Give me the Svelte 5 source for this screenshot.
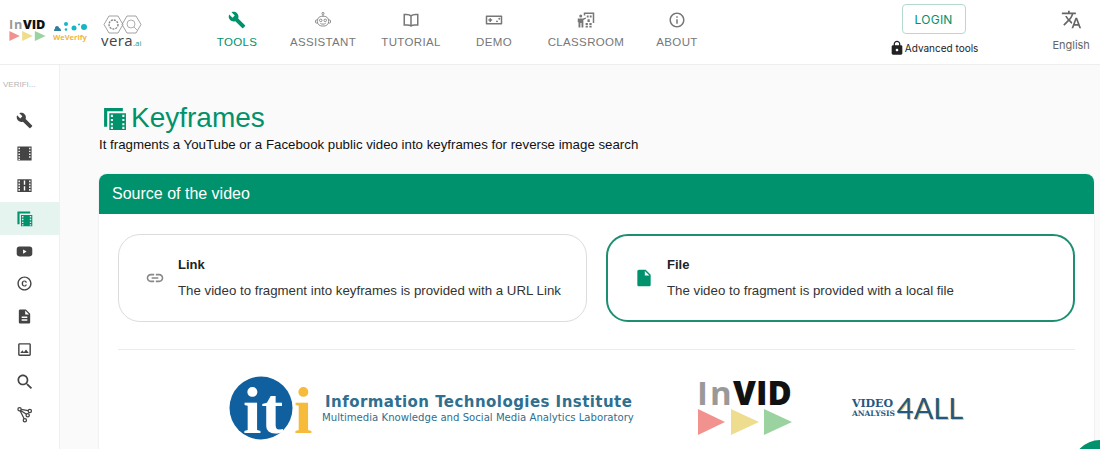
<script lang="ts">
	const green = '#00926c';

	const tabs = [
		{ label: 'TOOLS', width: 86, icon: 'build', active: true },
		{ label: 'ASSISTANT', width: 86, icon: 'robot' },
		{ label: 'TUTORIAL', width: 90, icon: 'book' },
		{ label: 'DEMO', width: 76, icon: 'game' },
		{ label: 'CLASSROOM', width: 108, icon: 'classroom' },
		{ label: 'ABOUT', width: 74, icon: 'info' }
	];

	const sideItems = [
		{ icon: 'build', size: 17 },
		{ icon: 'film', size: 17 },
		{ icon: 'film2', size: 17 },
		{ icon: 'keyframes', size: 17, active: true },
		{ icon: 'play', size: 17 },
		{ icon: 'copyright', size: 17 },
		{ icon: 'doc', size: 17 },
		{ icon: 'image', size: 17 },
		{ icon: 'search', size: 20 },
		{ icon: 'graph', size: 17 }
	];

	const options = [
		{ title: 'Link', text: 'The video to fragment into keyframes is provided with a URL Link', icon: 'link' },
		{ title: 'File', text: 'The video to fragment is provided with a local file', icon: 'file', active: true }
	];
</script>

{#snippet icon(name, size = 24)}
	<svg class="icon" width={size} height={size} viewBox="0 0 24 24" fill="currentColor" aria-hidden="true">
		{#if name === 'build'}
			<path d="M22.7 19l-9.1-9.1c.9-2.3.4-5-1.5-6.9-2-2-5-2.4-7.4-1.3L9 6 6 9 1.6 4.700C.4 7.100.9 10.100 2.900 12.100c1.900 1.900 4.600 2.400 6.900 1.500l9.100 9.100c.4.4 1 .4 1.400 0l2.300-2.300c.5-.4.5-1.100.1-1.400z" />
		{:else if name === 'robot'}
			<g fill="none" stroke="currentColor" stroke-width="1.1">
				<circle cx="12" cy="3.2" r="1.4" />
				<path d="M12 4.600V7" />
				<rect x="4.500" y="7" width="15" height="13" rx="6" />
				<path d="M4.500 12H3a1 1 0 0 0-1 1v2a1 1 0 0 0 1 1h1.800M19.500 12H21a1 1 0 0 1 1 1v2a1 1 0 0 1-1 1h-1.800" />
				<circle cx="9" cy="12.5" r="1.7" />
				<circle cx="15" cy="12.5" r="1.7" />
				<path d="M8.500 16.500c2 1.400 5 1.400 7 0" />
			</g>
		{:else if name === 'book'}
			<path fill="none" stroke="currentColor" stroke-width="2" d="M12 6.500C10.500 5 8.500 4.500 6 4.500H3v14h4c2 0 3.600.4 5 1.500 1.400-1.100 3-1.500 5-1.500h4v-14h-3c-2.500 0-4.500.5-6 2zM12 6.500V20" />
		{:else if name === 'game'}
			<path d="M2 6h20a1 1 0 0 1 1 1v10a1 1 0 0 1-1 1H2a1 1 0 0 1-1-1V7a1 1 0 0 1 1-1zm1 2v8h18V8H3zm3 1.500h2V11h1.500v2H8v1.500H6V13H4.500v-2H6V9.500zm10 3a1.300 1.300 0 1 1 0 2.600 1.300 1.300 0 0 1 0-2.600zm3-3.500a1.300 1.300 0 1 1 0 2.600 1.300 1.300 0 0 1 0-2.600z" />
		{:else if name === 'classroom'}
			<path d="M9 2h14v14h-2V4H11v2H9V2zM5 4.500a2 2 0 1 1 0 4 2 2 0 0 1 0-4zM1 10h7l3.500-1.500.7 1.600L8.500 12v10H6v-6H4.500v6H2v-7H1v-5zM13 6h2.500v2.500H13V6zm4 0h2.500v2.500H17V6zM11.500 16h3v2.500h-3V16zm5 0h3v2.500h-3V16zm-5 3.500h3V22h-3v-2.500zm5 0h3V22h-3v-2.500zM14 11h3v3.500h-3V11z" />
		{:else if name === 'info'}
			<path d="M11 7h2v2h-2zm0 4h2v6h-2zm1-9C6.480 2 2 6.480 2 12s4.480 10 10 10 10-4.480 10-10S17.520 2 12 2zm0 18c-4.410 0-8-3.590-8-8s3.590-8 8-8 8 3.590 8 8-3.590 8-8 8z" />
		{:else if name === 'lock'}
			<path d="M18 8h-1V6c0-2.760-2.240-5-5-5S7 3.240 7 6v2H6c-1.100 0-2 .9-2 2v10c0 1.100.9 2 2 2h12c1.100 0 2-.9 2-2V10c0-1.100-.9-2-2-2zm-6 9c-1.100 0-2-.9-2-2s.9-2 2-2 2 .9 2 2-.9 2-2 2zm3.100-9H8.900V6c0-1.710 1.390-3.100 3.100-3.100 1.710 0 3.100 1.390 3.100 3.100v2z" />
		{:else if name === 'translate'}
			<path d="M12.870 15.070l-2.540-2.510.03-.03c1.740-1.940 2.980-4.170 3.710-6.530H17V4h-7V2H8v2H1v1.990h11.170C11.500 7.920 10.440 9.750 9 11.350 8.070 10.320 7.300 9.190 6.690 8h-2c.73 1.630 1.730 3.170 2.980 4.560l-5.090 5.020L4 19l5-5 3.110 3.110.76-2.040zM18.500 10h-2L12 22h2l1.120-3h4.750L21 22h2l-4.500-12zm-2.620 7l1.620-4.330L19.120 17h-3.240z" />
		{:else if name === 'film'}
			<path fill-rule="evenodd" d="M2 2h20v20H2V2zm1.500 2v2h2V4h-2zm0 4v2h2V8h-2zm0 4v2h2v-2h-2zm0 4v2h2v-2h-2zm0 3.500V21h2v-1.500h-2zm15-15.500v2h2V4h-2zm0 4v2h2V8h-2zm0 4v2h2v-2h-2zm0 4v2h2v-2h-2z" />
		{:else if name === 'film2'}
			<path fill-rule="evenodd" d="M2 3h20v18H2V3zm1.500 2v2.500h2V5h-2zm0 4v2.500h2V9h-2zm0 4v2.500h2V13h-2zm0 4v2.500h2V17h-2zm15-12v2.500h2V5h-2zm0 4v2.500h2V9h-2zm0 4v2.500h2V13h-2zm0 4v2.500h2V17h-2zM11 5v6h2V5h-2zm0 8v6h2v-6h-2z" />
		{:else if name === 'keyframes'}
			<path d="M2 2h18v3H5v15H2V2z" />
			<path fill-rule="evenodd" d="M7 7h16v16H7V7zm1.500 1.500v2h2v-2h-2zm0 4v2h2v-2h-2zm0 4v2h2v-2h-2zm0 3.500v2h2v-2h-2zm11-11.500v2h2v-2h-2zm0 4v2h2v-2h-2zm0 4v2h2v-2h-2zm0 3.500v2h2v-2h-2z" />
		{:else if name === 'play'}
			<path fill-rule="evenodd" d="M5 5h14a4 4 0 0 1 4 4v6a4 4 0 0 1-4 4H5a4 4 0 0 1-4-4V9a4 4 0 0 1 4-4zm5 4v6l5-3-5-3z" />
		{:else if name === 'copyright'}
			<path d="M11.880 9.140c1.280.06 1.610 1.150 1.630 1.660h1.790c-.08-1.980-1.490-3.190-3.450-3.190C9.640 7.610 8 9 8 12.140c0 1.940.93 4.240 3.840 4.240 2.220 0 3.410-1.650 3.440-2.950h-1.790c-.03.59-.45 1.380-1.630 1.440-1.310-.04-1.860-1.060-1.860-2.730 0-2.890 1.280-2.980 1.880-3zM12 2C6.480 2 2 6.480 2 12s4.480 10 10 10 10-4.480 10-10S17.520 2 12 2zm0 18c-4.410 0-8-3.590-8-8s3.590-8 8-8 8 3.590 8 8-3.590 8-8 8z" />
		{:else if name === 'doc'}
			<path d="M14 2H6c-1.100 0-1.990.9-1.990 2L4 20c0 1.100.89 2 1.990 2H18c1.100 0 2-.9 2-2V8l-6-6zm2 16H8v-2h8v2zm0-4H8v-2h8v2zm-3-5V3.500L18.500 9H13z" />
		{:else if name === 'image'}
			<path d="M19 5v14H5V5h14m0-2H5c-1.100 0-2 .9-2 2v14c0 1.100.9 2 2 2h14c1.100 0 2-.9 2-2V5c0-1.100-.9-2-2-2zm-4.860 8.860l-3 3.870L9 13.140 6 17h12l-3.860-5.140z" />
		{:else if name === 'search'}
			<path d="M15.500 14h-.79l-.28-.27C15.410 12.590 16 11.110 16 9.500 16 5.910 13.090 3 9.500 3S3 5.910 3 9.500 5.910 16 9.500 16c1.610 0 3.090-.59 4.230-1.570l.27.28v.79l5 4.990L20.490 19l-4.990-5zm-6 0C7.010 14 5 11.990 5 9.500S7.010 5 9.500 5 14 7.010 14 9.500 11.990 14 9.500 14z" />
		{:else if name === 'graph'}
			<g fill="none" stroke="currentColor" stroke-width="1.8">
				<circle cx="5" cy="4.5" r="2.3" />
				<circle cx="19.5" cy="7" r="2.3" />
				<circle cx="16.5" cy="13" r="2.3" />
				<circle cx="12.5" cy="20" r="2.3" />
				<path d="M6.500 6.300l8.300 5.300M7.300 4.900l9.900 1.700M5.800 6.700l5.700 11.200" />
			</g>
		{:else if name === 'link'}
			<path d="M3.900 12c0-1.710 1.390-3.100 3.100-3.100h4V7H7c-2.760 0-5 2.240-5 5s2.240 5 5 5h4v-1.900H7c-1.710 0-3.100-1.390-3.100-3.100zM8 13h8v-2H8v2zm9-6h-4v1.900h4c1.710 0 3.100 1.390 3.100 3.100s-1.390 3.100-3.100 3.100h-4V17h4c2.760 0 5-2.240 5-5s-2.240-5-5-5z" />
		{:else if name === 'file'}
			<path d="M6 2c-1.100 0-1.990.9-1.990 2L4 20c0 1.100.89 2 1.990 2H18c1.100 0 2-.9 2-2V8l-6-6H6zm7 7V3.500L18.500 9H13z" />
		{/if}
	</svg>
{/snippet}

{#snippet invidLogo(width, height)}
	<svg {width} {height} viewBox="0 0 96 58" overflow="visible" aria-label="InVID">
		<text x="0" y="26" font-family="Open Sans, sans-serif" font-size="33" font-weight="700" letter-spacing="2" fill="#999">In</text>
		<text x="36" y="26" font-family="Open Sans, sans-serif" font-size="33" font-weight="800" fill="#111">VID</text>
		<path d="M1 30l27 13L1 56z" fill="#f2928f" />
		<path d="M34 30l28 13-28 13z" fill="#eedd8f" />
		<path d="M67 30l28 13-28 13z" fill="#9ad3a0" />
	</svg>
{/snippet}

<div class="page">
	<header class="topbar">
		<div class="logos">
			{@render invidLogo(37, 23)}
			<svg class="weverify" width="36" height="22" viewBox="0 0 36 22" aria-label="WeVerify">
				<circle cx="4" cy="8" r="2" fill="#2f7f9e" />
				<path d="M1 11a3.500 3.500 0 0 1 7 0z" fill="#2f7f9e" />
				<circle cx="13" cy="4" r="2" fill="#16b6c4" />
				<circle cx="13" cy="9.5" r="1.3" fill="#16b6c4" />
				<circle cx="21" cy="8" r="2.5" fill="#16b6c4" />
				<circle cx="26" cy="4.5" r="1" fill="#16b6c4" />
				<circle cx="31" cy="7" r="3" fill="#16b6c4" />
				<text x="0" y="20" font-family="Open Sans, sans-serif" font-size="7.5" font-weight="700" fill="#f0b73e">WeVerify</text>
			</svg>
			<svg class="vera" width="42" height="34" viewBox="0 0 42 34" aria-label="vera.ai">
				<path d="M8 1h9l5 8.500-5 8.500H8L3 9.500zM26 1h9l5 8.500-5 8.500h-9l-5-8.500z" fill="none" stroke="#8a8a8a" stroke-width=".8" />
				<circle cx="12.5" cy="9.5" r="4.500" fill="none" stroke="#888" stroke-width="1.4" stroke-dasharray="2 1" />
				<circle cx="30" cy="9" r="4" fill="none" stroke="#9a9a9a" stroke-width=".8" />
				<path d="M33 12l3 3" stroke="#9a9a9a" stroke-width=".8" />
				<text x="0" y="31" font-family="Open Sans, sans-serif" font-size="15" letter-spacing=".4" fill="#444">vera</text>
				<text x="32" y="31" font-family="Open Sans, sans-serif" font-size="8" fill="#16a38a">.ai</text>
			</svg>
		</div>

		<nav class="tabs">
			{#each tabs as tab}
				<div class="tab" class:active={tab.active} style="width: {tab.width}px">
					{@render icon(tab.icon, 18)}
					<span>{tab.label}</span>
				</div>
			{/each}
		</nav>

		<div class="account">
			<button class="login">LOGIN</button>
			<div class="advanced">
				{@render icon('lock', 16)}
				<span>Advanced tools</span>
			</div>
		</div>

		<div class="language">
			{@render icon('translate', 21)}
			<span>English</span>
		</div>
	</header>

	<div class="content">
		<aside class="sidebar">
			<div class="side-title">VERIFI...</div>
			{#each sideItems as item}
				<div class="side-item" class:active={item.active}>
					{@render icon(item.icon, item.size)}
				</div>
			{/each}
		</aside>

		<main class="main">
			<h1 class="page-title">
				{@render icon('keyframes', 25)}
				Keyframes
			</h1>
			<p class="subtitle">It fragments a YouTube or a Facebook public video into keyframes for reverse image search</p>

			<section class="card">
				<h2 class="card-head">Source of the video</h2>
				<div class="card-body">
					<div class="options">
						{#each options as option}
							<div class="option" class:active={option.active}>
								<span class="option-icon">{@render icon(option.icon, 20)}</span>
								<div>
									<h3>{option.title}</h3>
									<p>{option.text}</p>
								</div>
							</div>
						{/each}
					</div>

					<hr />

					<div class="partners">
						<div class="iti">
							<svg width="84" height="64" viewBox="0 0 84 64" overflow="visible" aria-label="iti">
								<circle cx="32" cy="32" r="31.5" fill="#10609f" />
								<text x="14" y="57" font-family="Liberation Serif, serif" font-size="66" font-weight="700" fill="#fff">it</text>
								<text x="65" y="57" font-family="Liberation Serif, serif" font-size="66" font-weight="700" fill="#f6bb3a">i</text>
							</svg>
							<div class="iti-text">
								<strong>Information Technologies Institute</strong>
								<span>Multimedia Knowledge and Social Media Analytics Laboratory</span>
							</div>
						</div>
						{@render invidLogo(96, 58)}
						<div class="v4a">
							<div class="v4a-small"><b>VIDEO</b><b class="analysis">ANALYSIS</b></div>
							<span>4ALL</span>
						</div>
					</div>
				</div>
			</section>
		</main>
	</div>

	<div class="fab" style="background: {green}"></div>
</div>

<style>
	:global(body) {
		margin: 0;
		background: #fafafa;
	}

	.page {
		position: relative;
		height: 449px;
		overflow: hidden;
		font-family: 'Liberation Sans', Arial, sans-serif;
		color: #000;
	}

	.icon {
		display: block;
		flex: none;
	}

	.topbar {
		display: flex;
		align-items: flex-start;
		box-sizing: border-box;
		height: 65px;
		background: #fff;
		border-bottom: 1px solid #eeeeee;
	}

	.logos {
		display: flex;
		align-items: flex-start;
		gap: 7px;
		width: 194px;
		flex: none;
		padding: 19px 0 0 9px;
		box-sizing: border-box;
	}

	.weverify {
		margin-top: 1px;
	}

	.vera {
		margin: -4px 0 0 5px;
	}

	.tabs {
		display: flex;
		flex: none;
		padding-top: 11px;
	}

	.tab {
		display: flex;
		flex-direction: column;
		align-items: center;
		gap: 7px;
		font-size: 11.5px;
		letter-spacing: 0.03em;
		color: #777;
	}

	.tab.active {
		color: #00926c;
	}

	.account {
		display: flex;
		flex-direction: column;
		align-items: center;
		width: 100px;
		margin-left: 171.5px;
		padding-top: 4px;
	}

	.login {
		width: 64px;
		height: 30px;
		padding: 0;
		background: #fff;
		border: 1px solid #b6d9cf;
		border-radius: 4px;
		font-family: Inter, sans-serif;
		font-size: 12px;
		letter-spacing: 0.02em;
		color: #00926c;
	}

	.advanced {
		display: flex;
		align-items: center;
		margin-top: 6px;
		font-family: Inter, sans-serif;
		font-size: 10px;
		white-space: nowrap;
		color: #222;
	}

	.language {
		display: flex;
		flex-direction: column;
		align-items: center;
		gap: 8px;
		width: 60px;
		margin-left: 60.5px;
		padding-top: 9px;
		font-family: Inter, sans-serif;
		font-size: 11px;
		color: #666;
	}

	.content {
		display: flex;
		height: 384px;
	}

	.sidebar {
		flex: none;
		box-sizing: border-box;
		width: 60px;
		padding-top: 15px;
		background: #fff;
		border-right: 1px solid #f0f0f0;
	}

	.side-title {
		height: 24px;
		padding-left: 3px;
		font-size: 8px;
		color: #b5b5b5;
	}

	.side-item {
		display: flex;
		align-items: center;
		justify-content: center;
		box-sizing: border-box;
		height: 32.7px;
		padding-right: 10px;
		color: #444;
	}

	.side-item.active {
		background: #e6f4f0;
		color: #00926c;
	}

	.main {
		flex: 1;
		min-width: 0;
		padding: 37px 6px 0 39px;
	}

	.page-title {
		display: flex;
		align-items: center;
		gap: 4px;
		margin: 0 0 0 3px;
		font-size: 28px;
		font-weight: 400;
		line-height: 32px;
		color: #00926c;
	}

	.subtitle {
		margin: 2px 0 0;
		font-size: 13.28px;
		line-height: 17px;
		color: #111;
	}

	.card {
		margin-top: 21px;
		background: #fff;
		border-radius: 8px 8px 0 0;
		box-shadow: 0 0 2px rgba(0, 0, 0, 0.12);
	}

	.card-head {
		margin: 0;
		padding: 0 13px;
		height: 40px;
		line-height: 39px;
		background: #00926c;
		border-radius: 8px 8px 0 0;
		font-size: 16px;
		font-weight: 400;
		color: #fff;
	}

	.card-body {
		padding: 20px 19px 40px;
	}

	.options {
		display: grid;
		grid-template-columns: 1fr 1fr;
		gap: 19px;
	}

	.option {
		display: flex;
		align-items: center;
		gap: 13px;
		box-sizing: border-box;
		height: 88px;
		padding: 0 16px 0 26px;
		border: 1px solid #dcdcdc;
		border-radius: 22px;
		color: #333;
	}

	.option.active {
		border: 2px solid #1c8f70;
		padding-left: 26px;
	}

	.option-icon {
		color: #888;
	}

	.option.active .option-icon {
		color: #00926c;
	}

	.option h3 {
		margin: 0 0 10px;
		font-size: 13px;
		line-height: 15px;
		font-weight: 700;
		color: #222;
	}

	.option p {
		margin: 0;
		font-size: 13.28px;
		line-height: 17px;
		white-space: nowrap;
	}

	hr {
		margin: 27px 0 0;
		border: 0;
		border-top: 1px solid #ececec;
	}

	.partners {
		display: flex;
		align-items: center;
		margin-top: 26px;
		padding-left: 111px;
	}

	.iti {
		display: flex;
		align-items: center;
		gap: 9px;
		margin-right: 63px;
	}

	.iti-text {
		display: flex;
		flex-direction: column;
		gap: 2px;
		color: #2f6f8f;
		font-family: 'DejaVu Sans', sans-serif;
		white-space: nowrap;
	}

	.iti-text strong {
		padding-left: 3px;
		font-size: 15px;
		line-height: 17px;
		letter-spacing: 0.03em;
	}

	.iti-text span {
		font-size: 10.15px;
		line-height: 10px;
	}

	.v4a {
		display: flex;
		align-items: center;
		margin-left: 59px;
		color: #26587f;
	}

	.v4a-small {
		display: flex;
		flex-direction: column;
		font-family: 'DejaVu Serif', serif;
		font-size: 11px;
		line-height: 11px;
	}

	.v4a-small .analysis {
		font-size: 7.5px;
		line-height: 9px;
	}

	.v4a span {
		margin-left: 2px;
		font-family: Lato, sans-serif;
		font-size: 29px;
		line-height: 30px;
		text-shadow: 1px 1px 0 #e8c36a;
	}

	.fab {
		position: absolute;
		right: -28px;
		bottom: -47px;
		width: 56px;
		height: 56px;
		border-radius: 50%;
	}
</style>
